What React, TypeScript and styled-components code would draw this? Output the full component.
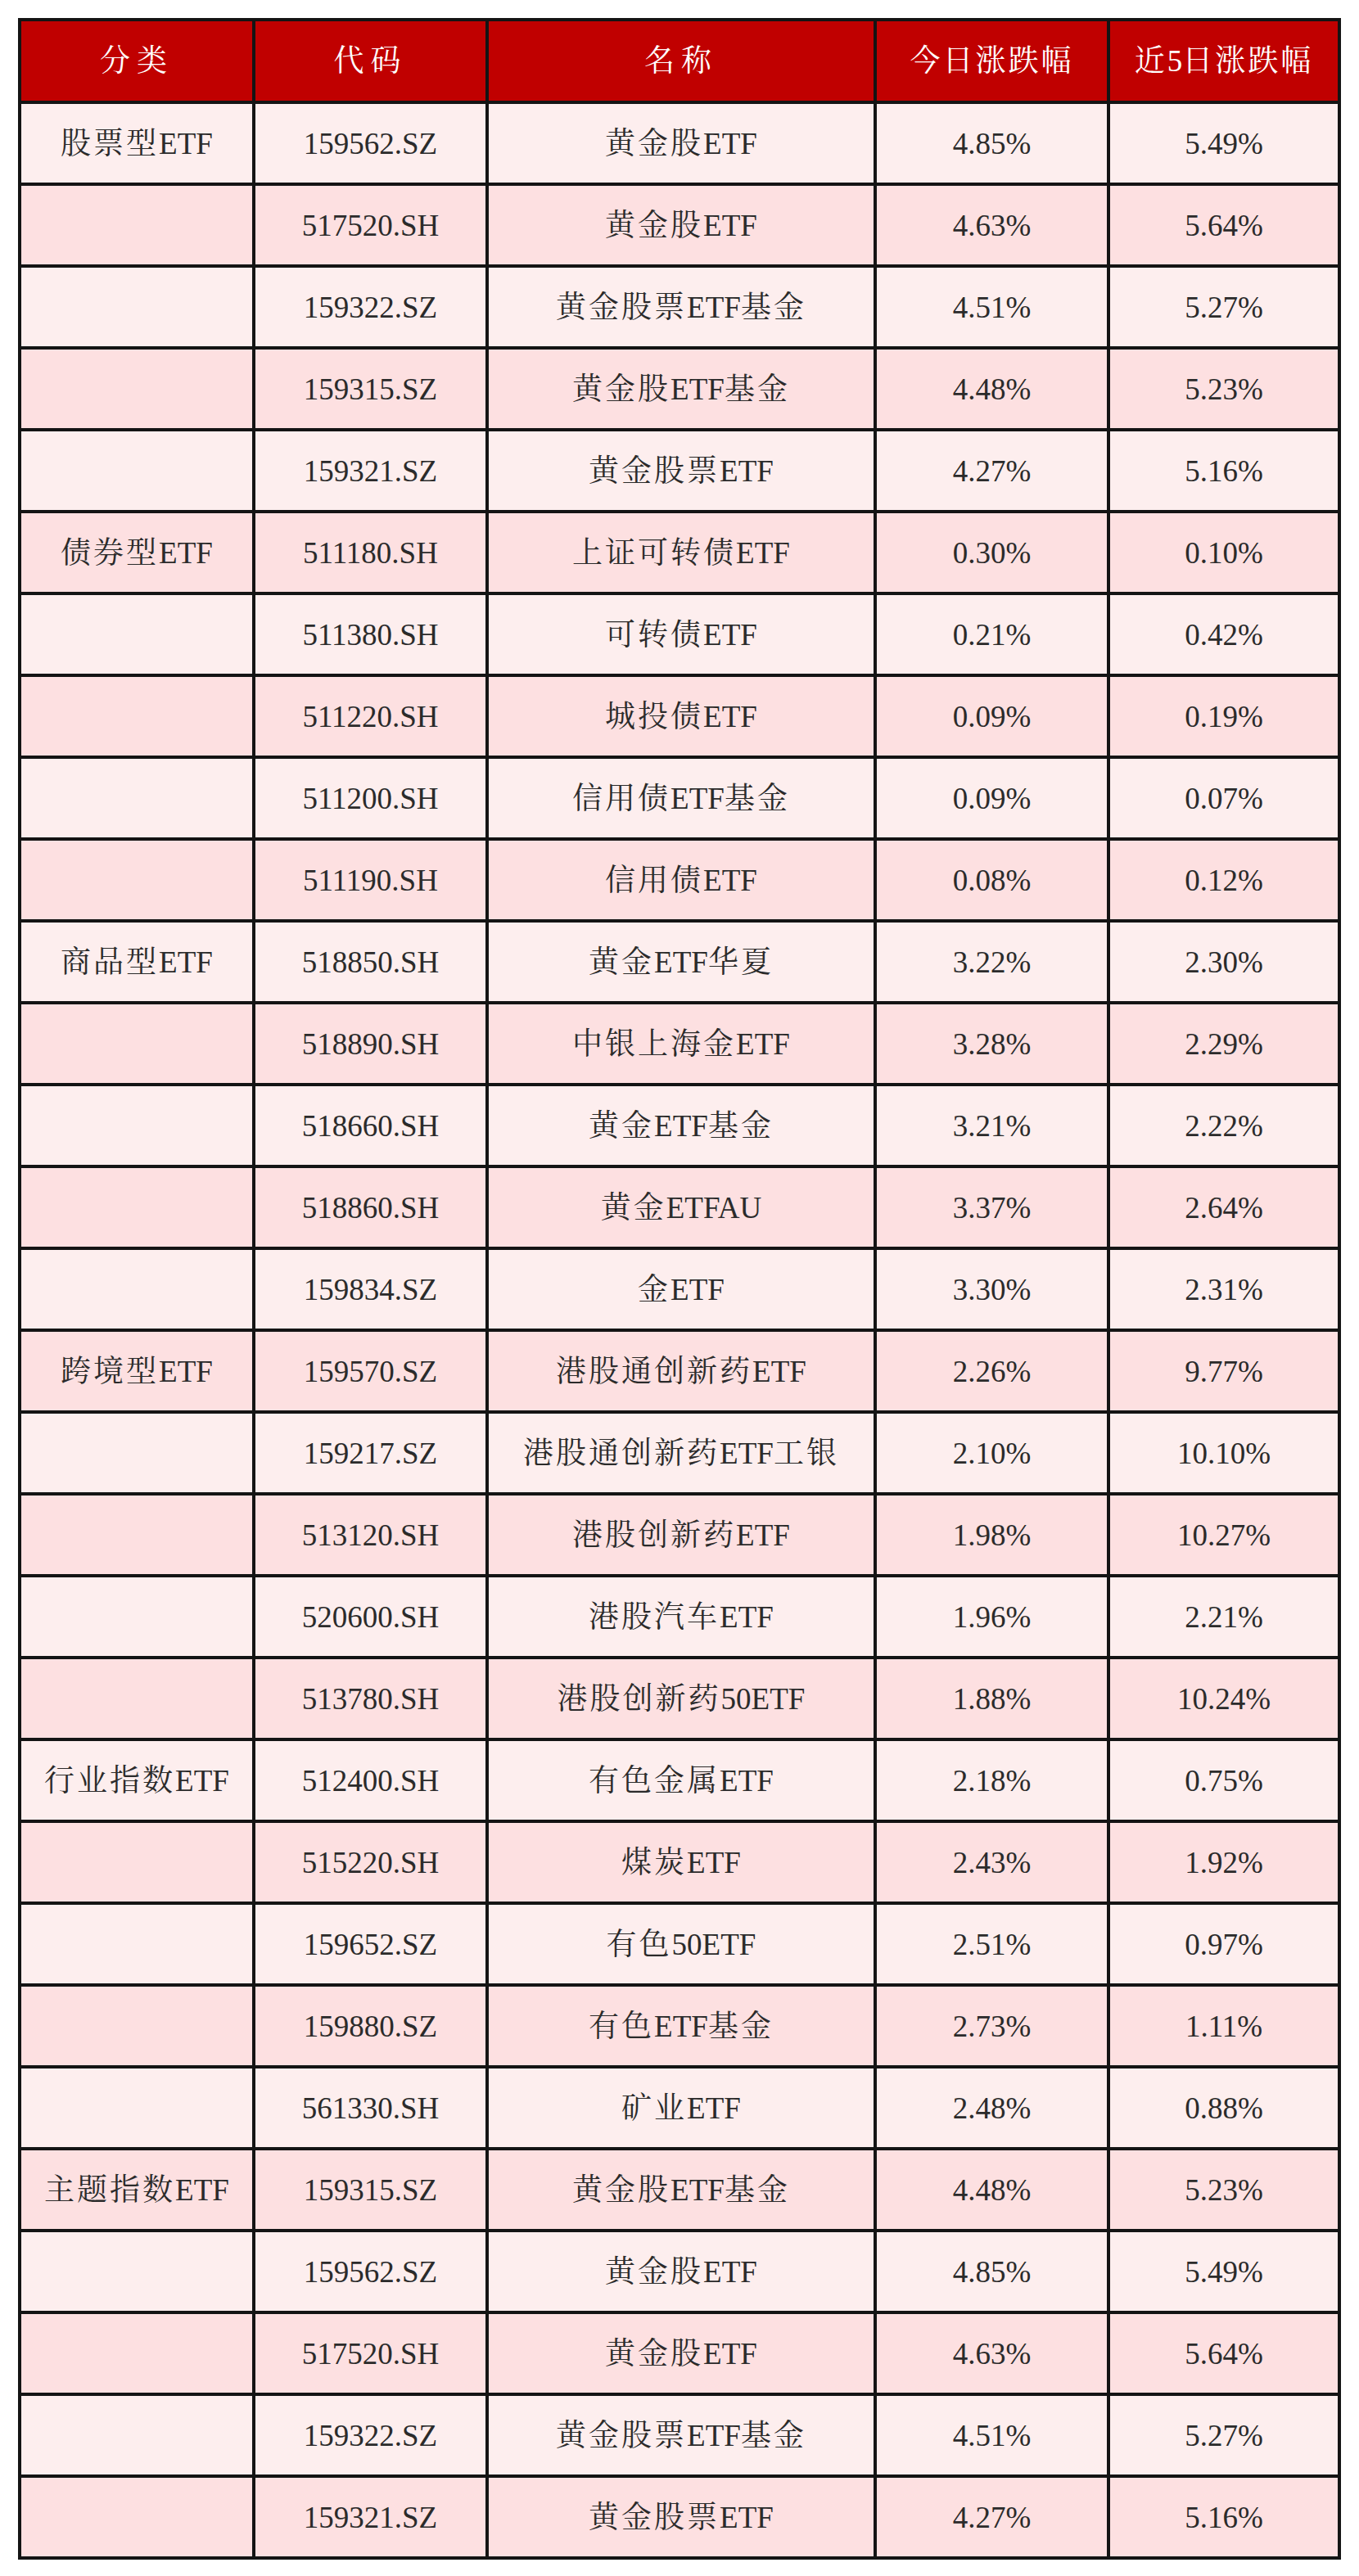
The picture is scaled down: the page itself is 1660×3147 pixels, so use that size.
import React from "react";
import styled, { createGlobalStyle } from "styled-components";

const Global = createGlobalStyle`
  html, body { margin: 0; padding: 0; background: #ffffff; }
  body { font-family: "Liberation Serif", "Noto Serif CJK SC", "Noto Sans CJK SC", serif; }
`;

type Row = { cat?: string; code: string; name: string; today: string; five: string };

const groups: { cat: string; rows: [string, string, string, string][] }[] = [
  {
    cat: "股票型ETF",
    rows: [
      ["159562.SZ", "黄金股ETF", "4.85%", "5.49%"],
      ["517520.SH", "黄金股ETF", "4.63%", "5.64%"],
      ["159322.SZ", "黄金股票ETF基金", "4.51%", "5.27%"],
      ["159315.SZ", "黄金股ETF基金", "4.48%", "5.23%"],
      ["159321.SZ", "黄金股票ETF", "4.27%", "5.16%"],
    ],
  },
  {
    cat: "债券型ETF",
    rows: [
      ["511180.SH", "上证可转债ETF", "0.30%", "0.10%"],
      ["511380.SH", "可转债ETF", "0.21%", "0.42%"],
      ["511220.SH", "城投债ETF", "0.09%", "0.19%"],
      ["511200.SH", "信用债ETF基金", "0.09%", "0.07%"],
      ["511190.SH", "信用债ETF", "0.08%", "0.12%"],
    ],
  },
  {
    cat: "商品型ETF",
    rows: [
      ["518850.SH", "黄金ETF华夏", "3.22%", "2.30%"],
      ["518890.SH", "中银上海金ETF", "3.28%", "2.29%"],
      ["518660.SH", "黄金ETF基金", "3.21%", "2.22%"],
      ["518860.SH", "黄金ETFAU", "3.37%", "2.64%"],
      ["159834.SZ", "金ETF", "3.30%", "2.31%"],
    ],
  },
  {
    cat: "跨境型ETF",
    rows: [
      ["159570.SZ", "港股通创新药ETF", "2.26%", "9.77%"],
      ["159217.SZ", "港股通创新药ETF工银", "2.10%", "10.10%"],
      ["513120.SH", "港股创新药ETF", "1.98%", "10.27%"],
      ["520600.SH", "港股汽车ETF", "1.96%", "2.21%"],
      ["513780.SH", "港股创新药50ETF", "1.88%", "10.24%"],
    ],
  },
  {
    cat: "行业指数ETF",
    rows: [
      ["512400.SH", "有色金属ETF", "2.18%", "0.75%"],
      ["515220.SH", "煤炭ETF", "2.43%", "1.92%"],
      ["159652.SZ", "有色50ETF", "2.51%", "0.97%"],
      ["159880.SZ", "有色ETF基金", "2.73%", "1.11%"],
      ["561330.SH", "矿业ETF", "2.48%", "0.88%"],
    ],
  },
  {
    cat: "主题指数ETF",
    rows: [
      ["159315.SZ", "黄金股ETF基金", "4.48%", "5.23%"],
      ["159562.SZ", "黄金股ETF", "4.85%", "5.49%"],
      ["517520.SH", "黄金股ETF", "4.63%", "5.64%"],
      ["159322.SZ", "黄金股票ETF基金", "4.51%", "5.27%"],
      ["159321.SZ", "黄金股票ETF", "4.27%", "5.16%"],
    ],
  },
];

const rows: Row[] = groups.flatMap((g) =>
  g.rows.map(([code, name, today, five], i) => ({
    cat: i === 0 ? g.cat : undefined,
    code,
    name,
    today,
    five,
  }))
);

const Page = styled.div`
  padding: 22px 26px 24px 22px;
`;

const Table = styled.table`
  width: 1612px;
  border-collapse: collapse;
  table-layout: fixed;
  border: 4px solid #141414;
  font-family: "Liberation Serif", "Noto Serif CJK SC", "Noto Sans CJK SC", serif;
  font-size: 37px;
  line-height: 1;
  color: #2b2b2b;
`;

const HeadCell = styled.th`
  height: 97px;
  padding: 0;
  background: #c00000;
  color: #ffffff;
  font-weight: 400;
  text-align: center;
  vertical-align: middle;
  border: 4px solid #141414;
`;

const BodyRow = styled.tr<{ $alt: boolean }>`
  background: ${(p) => (p.$alt ? "#fde0e1" : "#fdeeee")};
`;

const Cell = styled.td`
  height: 96px;
  padding: 0;
  text-align: center;
  vertical-align: middle;
  border: 4px solid #141414;
  white-space: nowrap;
`;

const Han = styled.span`
  letter-spacing: 3px;
`;

const HeadHan = styled.span`
  letter-spacing: 8px;
`;

function Mixed({ text, head }: { text: string; head?: boolean }) {
  const parts = text.match(/[\u4e00-\u9fff]+|[^\u4e00-\u9fff]+/g) || [];
  const H = head ? HeadHan : Han;
  return (
    <>
      {parts.map((p, i) =>
        /[\u4e00-\u9fff]/.test(p) ? <H key={i}>{p}</H> : <React.Fragment key={i}>{p}</React.Fragment>
      )}
    </>
  );
}

const widths = [286, 285, 474, 285, 282];
const heads = ["分类", "代码", "名称", "今日涨跌幅", "近5日涨跌幅"];

export default function App() {
  return (
    <>
      <Global />
      <Page>
        <Table>
          <colgroup>
            {widths.map((w, i) => (
              <col key={i} style={{ width: w }} />
            ))}
          </colgroup>
          <thead>
            <tr>
              {heads.map((h) => (
                <HeadCell key={h}>
                  <Mixed text={h} head={h.length <= 2} />
                </HeadCell>
              ))}
            </tr>
          </thead>
          <tbody>
            {rows.map((r, i) => (
              <BodyRow key={i} $alt={i % 2 === 1}>
                <Cell>{r.cat ? <Mixed text={r.cat} /> : null}</Cell>
                <Cell>{r.code}</Cell>
                <Cell>
                  <Mixed text={r.name} />
                </Cell>
                <Cell>{r.today}</Cell>
                <Cell>{r.five}</Cell>
              </BodyRow>
            ))}
          </tbody>
        </Table>
      </Page>
    </>
  );
}
